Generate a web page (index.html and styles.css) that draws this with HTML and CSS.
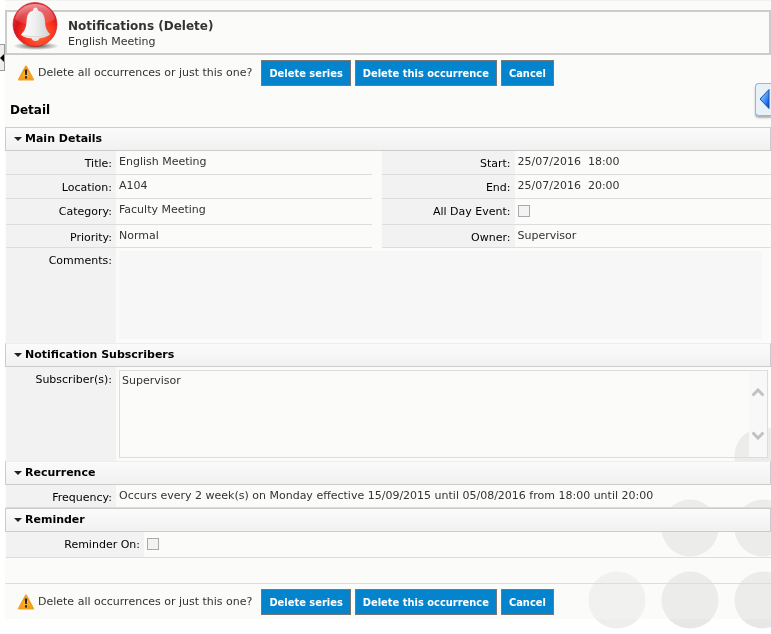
FILE: index.html
```html
<!DOCTYPE html>
<html lang="en">
<head>
  <meta charset="UTF-8">
  <meta name="viewport" content="width=device-width, initial-scale=1.0">
  <title>Notifications (Delete)</title>
  <link rel="stylesheet" href="styles.css">
</head>
<body>
  <svg class="circles" width="183" height="202" viewBox="0 0 183 202" fill="#e7e7e7" aria-hidden="true">
    <circle cx="175" cy="29" r="28.5"/>
    <circle cx="102" cy="101" r="28.5"/>
    <circle cx="175" cy="101" r="28.5"/>
    <circle cx="29" cy="173" r="28.5" fill="#eeeeee"/>
    <circle cx="102" cy="173" r="28.5"/>
    <circle cx="175" cy="173" r="28.5"/>
  </svg>

  <button class="tab tab-left" type="button" aria-label="Collapse menu">
    <svg width="4" height="8" viewBox="0 0 4 8"><path d="M0 4 4 0V8z" fill="#000"/></svg>
  </button>
  <button class="tab tab-right" type="button" aria-label="Open panel">
    <svg width="11" height="22" viewBox="0 0 11 22">
      <defs>
        <linearGradient id="arrow" x1="0" y1="0" x2="1" y2="1">
          <stop offset="0.2" stop-color="#8cc4ff"/>
          <stop offset="0.6" stop-color="#3a8cf5"/>
          <stop offset="1" stop-color="#0034c8"/>
        </linearGradient>
      </defs>
      <path d="M1 11 10 1.500V20.500z" fill="url(#arrow)" stroke="#1c4fa8" stroke-linejoin="round"/>
    </svg>
  </button>

  <form class="page">
    <header class="header">
      <svg class="bell" width="48" height="48" viewBox="0 0 48 48" aria-hidden="true">
        <defs>
          <radialGradient id="red" cx="0.6" cy="0.72" r="0.7">
            <stop offset="0" stop-color="#ff6a35"/>
            <stop offset="0.45" stop-color="#fb3a20"/>
            <stop offset="0.8" stop-color="#d8101c"/>
            <stop offset="1" stop-color="#e03038"/>
          </radialGradient>
          <linearGradient id="shine" x1="0" y1="0" x2="0" y2="1">
            <stop offset="0" stop-color="#fff" stop-opacity="0.5"/>
            <stop offset="1" stop-color="#fff" stop-opacity="0.05"/>
          </linearGradient>
          <linearGradient id="metal" x1="0" y1="0" x2="1" y2="0">
            <stop offset="0" stop-color="#fff"/>
            <stop offset="0.5" stop-color="#eeeeee"/>
            <stop offset="1" stop-color="#cfd2d6"/>
          </linearGradient>
          <radialGradient id="shadow">
            <stop offset="0" stop-color="#222" stop-opacity="0.8"/>
            <stop offset="1" stop-color="#222" stop-opacity="0"/>
          </radialGradient>
        </defs>
        <ellipse cx="24" cy="44" rx="23" ry="4" fill="url(#shadow)"/>
        <circle cx="23" cy="22.500" r="22" fill="url(#red)" stroke="#c81420" stroke-width="0.6"/>
        <path d="M3 17C5 8 13 2 23 2s18 6 20 15c-9 7-30 9-40 0z" fill="url(#shine)"/>
        <path d="M19.500 35a4 4 0 0 0 8 0z" fill="#e4e4e6"/>
        <path d="M21 8.500c0-4 5-4 5 0 5 1.500 6.500 5 7 11 .3 6 1.500 9 5 12.500-2.500 3-8 4.500-14.500 4.500S11.500 35.500 9 32.500c4-4 5-7 5.500-12.500.5-6.500 1.500-10 6.500-11.500z" fill="url(#metal)"/>
        <path d="M9 32.500c6 3 22 3 28.500 0" fill="none" stroke="#d6d6d8"/>
      </svg>
      <h1 class="header-title">Notifications (Delete)</h1>
      <p class="header-sub">English Meeting</p>
    </header>

    <div class="actions">
      <svg class="warn" width="17" height="16" viewBox="0 0 17 16" aria-hidden="true">
        <defs>
          <linearGradient id="amber" x1="0" y1="0" x2="0" y2="1">
            <stop offset="0" stop-color="#ffd060"/>
            <stop offset="1" stop-color="#f99a0c"/>
          </linearGradient>
        </defs>
        <path d="M9 1.500 16 14.500H2z" fill="url(#amber)" stroke="#f0a020" stroke-width="2" stroke-linejoin="round"/>
        <path d="M7.800 4.500h2.400l-.4 5.500H8.200zM8 11.200h2v2.200H8z" fill="#222"/>
      </svg>
      <span class="prompt">Delete all occurrences or just this one?</span>
      <button class="btn" type="button">Delete series</button>
      <button class="btn" type="button">Delete this occurrence</button>
      <button class="btn" type="button">Cancel</button>
    </div>

    <h2 class="detail">Detail</h2>

    <h3 class="bar">Main Details</h3>
    <div class="columns">
      <div class="column">
        <div class="row"><span class="label">Title:</span><span class="value">English Meeting</span></div>
        <div class="row"><span class="label">Location:</span><span class="value">A104</span></div>
        <div class="row tall"><span class="label">Category:</span><span class="value">Faculty Meeting</span></div>
        <div class="row short"><span class="label">Priority:</span><span class="value">Normal</span></div>
      </div>
      <div class="column column-right">
        <div class="row"><span class="label">Start:</span><span class="value">25/07/2016&nbsp; 18:00</span></div>
        <div class="row"><span class="label">End:</span><span class="value">25/07/2016&nbsp; 20:00</span></div>
        <div class="row tall"><label class="label" for="allday">All Day Event:</label><input class="check" type="checkbox" id="allday"></div>
        <div class="row short"><span class="label">Owner:</span><span class="value">Supervisor</span></div>
      </div>
    </div>
    <div class="row area">
      <label class="label" for="comments">Comments:</label>
      <textarea class="comments" id="comments" readonly></textarea>
    </div>

    <h3 class="bar bar-light">Notification Subscribers</h3>
    <div class="row area">
      <label class="label" for="subscribers">Subscriber(s):</label>
      <div class="list">
        <textarea class="subscribers" id="subscribers" readonly>Supervisor</textarea>
        <div class="scroll">
          <svg width="12" height="9" viewBox="0 0 12 9"><path d="M0.500 7.500 6 2l5.500 5.500" fill="none" stroke="#c1c1c1" stroke-width="3"/></svg>
          <svg width="12" height="9" viewBox="0 0 12 9"><path d="M0.500 1.500 6 7l5.500-5.500" fill="none" stroke="#c1c1c1" stroke-width="3"/></svg>
        </div>
      </div>
    </div>

    <h3 class="bar bar-light">Recurrence</h3>
    <div class="row short">
      <span class="label">Frequency:</span>
      <span class="value">Occurs every 2 week(s) on Monday effective 15/09/2015 until 05/08/2016 from 18:00 until 20:00</span>
    </div>

    <h3 class="bar">Reminder</h3>
    <div class="row tall reminder">
      <label class="label" for="reminder">Reminder On:</label>
      <input class="check" type="checkbox" id="reminder">
    </div>

    <div class="actions actions-bottom">
      <svg class="warn" width="17" height="16" viewBox="0 0 17 16" aria-hidden="true">
        <path d="M9 1.500 16 14.500H2z" fill="url(#amber)" stroke="#f0a020" stroke-width="2" stroke-linejoin="round"/>
        <path d="M7.800 4.500h2.400l-.4 5.500H8.200zM8 11.200h2v2.200H8z" fill="#222"/>
      </svg>
      <span class="prompt">Delete all occurrences or just this one?</span>
      <button class="btn" type="button">Delete series</button>
      <button class="btn" type="button">Delete this occurrence</button>
      <button class="btn" type="button">Cancel</button>
    </div>
  </form>
</body>
</html>
```
FILE: styles.css
```css
* {
  box-sizing: border-box;
}
body {
  margin: 0;
  padding-left: 5px;
  font-family: Verdana, "DejaVu Sans", sans-serif;
  font-size: 11px;
  line-height: 16px;
  color: #333;
  background-color: #fff;
}
h1, h2, h3, p {
  margin: 0;
}
.circles {
  position: fixed;
  right: 0;
  bottom: 5px;
  z-index: -1;
}
.page {
  background-color: rgba(245, 245, 240, 0.4);
  border-top: 1px solid #f2f2f2;
  padding: 9px 0 4px;
}

/* side tabs */
.tab {
  position: absolute;
  display: flex;
  align-items: center;
  padding: 0;
}
.tab-left {
  left: 0;
  top: 44px;
  width: 5px;
  height: 27px;
  border: 1px solid #999;
  border-left: none;
  background-color: #eee;
}
.tab-right {
  right: 0;
  top: 83px;
  width: 16px;
  height: 33px;
  padding-left: 3px;
  border: 1px solid #8ab8f5;
  border-right: none;
  border-radius: 4px 0 0 4px;
  background-color: #e8f0f8;
  box-shadow: 0 2px 2px rgba(0, 0, 0, 0.3);
}
.tab-right svg {
  margin-top: -2px;
}

/* header */
.header {
  position: relative;
  height: 45px;
  padding: 6px 0 0 61px;
  border: 2px solid #ccc;
}
.bell {
  position: absolute;
  left: 5px;
  top: -10px;
}
.header-title {
  font-size: 12px;
  line-height: 16px;
}

/* action rows */
.actions {
  display: flex;
  align-items: center;
  gap: 4px;
  padding: 5px 0 5px 12px;
}
.prompt {
  margin-right: 5px;
}
.btn {
  height: 26px;
  padding: 0 7px;
  border: 1px solid #777;
  background-color: #0484cc;
  color: #fff;
  font-family: Tahoma, "DejaVu Sans Condensed", sans-serif;
  font-size: 11px;
  font-weight: bold;
  cursor: pointer;
}
.btn:hover {
  background-color: #0370ad;
}
.actions-bottom {
  margin-top: 25px;
  border-top: 1px solid #ddd;
  padding-bottom: 0;
}
.detail {
  padding: 11px 5px 9px;
  font-size: 12px;
  line-height: 16px;
  color: #000;
}

/* section bars */
.bar {
  display: flex;
  align-items: center;
  gap: 3px;
  height: 24px;
  padding-left: 8px;
  border: 1px solid #ccc;
  background: linear-gradient(#fbfbfb, #f1f1f1);
  color: #000;
  font-size: 11px;
}
.bar::before {
  content: "";
  border: 4px solid transparent;
  border-top-color: #222;
  border-bottom: none;
}
.bar-light {
  border-top-color: #eee;
}

/* form rows */
.columns {
  display: flex;
  gap: 10px;
}
.column {
  flex: 1 1 110px;
}
.column-right {
  flex-basis: 133px;
}
.row {
  display: flex;
  min-height: 24px;
  margin-left: 1px;
  border-bottom: 1px solid #ddd;
}
.column-right .row {
  margin-left: 0;
}
.short {
  min-height: 23px;
}
.tall {
  min-height: 26px;
}
.label {
  flex: none;
  width: 110px;
  padding: 5px 4px 0 0;
  background-color: #f2f2f2;
  color: #000;
  text-align: right;
}
.column-right .label {
  width: 133px;
}
.reminder .label {
  width: 138px;
}
.value {
  padding: 3px 0 0 3px;
}
.check {
  appearance: none;
  width: 12px;
  height: 12px;
  margin: 6px 0 0 3px;
  border: 1px solid #aaa;
  background-color: #f3f3f3;
}
.check:checked {
  background-color: #0484cc;
}
.area {
  border-bottom: none;
}
textarea {
  display: block;
  border: none;
  resize: none;
  outline: none;
  font: inherit;
  color: inherit;
}
.comments {
  flex: 1;
  height: 88px;
  margin: 3px 9px 4px 3px;
  background-color: #f7f7f7;
}
.list {
  position: relative;
  flex: 1;
  margin: 3px;
}
.subscribers {
  width: 100%;
  height: 88px;
  padding: 2px;
  border: 1px solid #ddd;
  background-color: transparent;
}
.scroll {
  position: absolute;
  right: 1px;
  top: 1px;
  bottom: 1px;
  width: 18px;
  display: flex;
  flex-direction: column;
  align-items: center;
  justify-content: space-between;
  padding: 17px 0;
  background-color: #f8f8f8;
}
```
